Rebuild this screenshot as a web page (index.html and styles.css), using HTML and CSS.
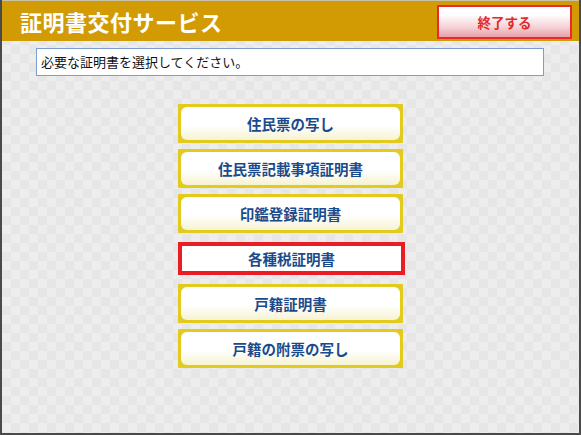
FILE: index.html
```html
<!DOCTYPE html>
<html lang="ja">
<head>
    <meta charset="UTF-8">
    <meta name="viewport" content="width=device-width, initial-scale=1.0">
    <title>証明書交付サービス</title>
    <link rel="stylesheet" href="styles.css">
</head>
<body>
    <div class="screen">
        <div class="header">
            <h1>証明書交付サービス</h1>
            <button class="exit-btn">終了する</button>
        </div>

        <div class="message">必要な証明書を選択してください。</div>

        <div class="menu">
            <button class="menu-btn"><span>住民票の写し</span></button>
            <button class="menu-btn"><span>住民票記載事項証明書</span></button>
            <button class="menu-btn"><span>印鑑登録証明書</span></button>
            <button class="menu-btn selected"><span>各種税証明書</span></button>
            <button class="menu-btn"><span>戸籍証明書</span></button>
            <button class="menu-btn"><span>戸籍の附票の写し</span></button>
        </div>
    </div>
</body>
</html>
```

FILE: styles.css
```css
body {
    margin: 0;
    font-family: "Noto Sans CJK JP", "Noto Sans", sans-serif;
}

.screen {
    box-sizing: border-box;
    width: 581px;
    height: 435px;
    border: 2px solid #4a4a4a;
    border-top: none;
    background-color: #e6e6e6;
    background-image:
        linear-gradient(45deg, #ededed 25%, transparent 25%, transparent 75%, #ededed 75%),
        linear-gradient(45deg, #ededed 25%, transparent 25%, transparent 75%, #ededed 75%);
    background-size: 18px 18px;
    background-position: 0 0, 9px 9px;
}

.header {
    height: 41px;
    background-color: #d29b04;
    border-top: 1px solid #c9c1a8;
    box-sizing: border-box;
    display: flex;
    align-items: center;
    justify-content: space-between;
    padding: 0 7px 0 18px;
}

h1 {
    margin: 0;
    color: white;
    font-size: 22px;
    font-weight: bold;
    letter-spacing: 0.5px;
}

.exit-btn {
    width: 135px;
    height: 34px;
    margin-top: 2px;
    border: 2px solid #ea2a2a;
    background: linear-gradient(to bottom, #ffffff 25%, #f6d4d8 65%, #e8a0aa);
    color: #e32a2a;
    font-family: inherit;
    font-size: 13.5px;
    font-weight: bold;
    cursor: pointer;
}

.message {
    box-sizing: border-box;
    width: 508px;
    height: 28px;
    margin: 7px 0 0 34px;
    padding-left: 4px;
    background-color: white;
    border: 1px solid #7d9cd2;
    font-size: 13px;
    line-height: 26px;
    color: #111;
}

.menu {
    display: flex;
    flex-direction: column;
    align-items: center;
    gap: 6px;
    margin-top: 28px;
}

.menu-btn {
    box-sizing: border-box;
    width: 225px;
    height: 39px;
    padding: 3px;
    border: none;
    border-radius: 1px;
    background: #e2cb1e;
    cursor: pointer;
}

.menu-btn span {
    display: flex;
    align-items: center;
    justify-content: center;
    height: 100%;
    border-radius: 6px;
    background: linear-gradient(to bottom, #ffffff 55%, #f6f3d2);
    color: #1b4a8c;
    font-family: "Noto Sans CJK JP", sans-serif;
    font-size: 14.5px;
    font-weight: bold;
}

.menu-btn.selected {
    width: 227px;
    height: 33px;
    margin: 3px 0 3px 2px;
    padding: 0;
    border: 4px solid #ea1c24;
    border-radius: 0;
    background: white;
}

.menu-btn.selected span {
    border-radius: 0;
    background: white;
}
```
